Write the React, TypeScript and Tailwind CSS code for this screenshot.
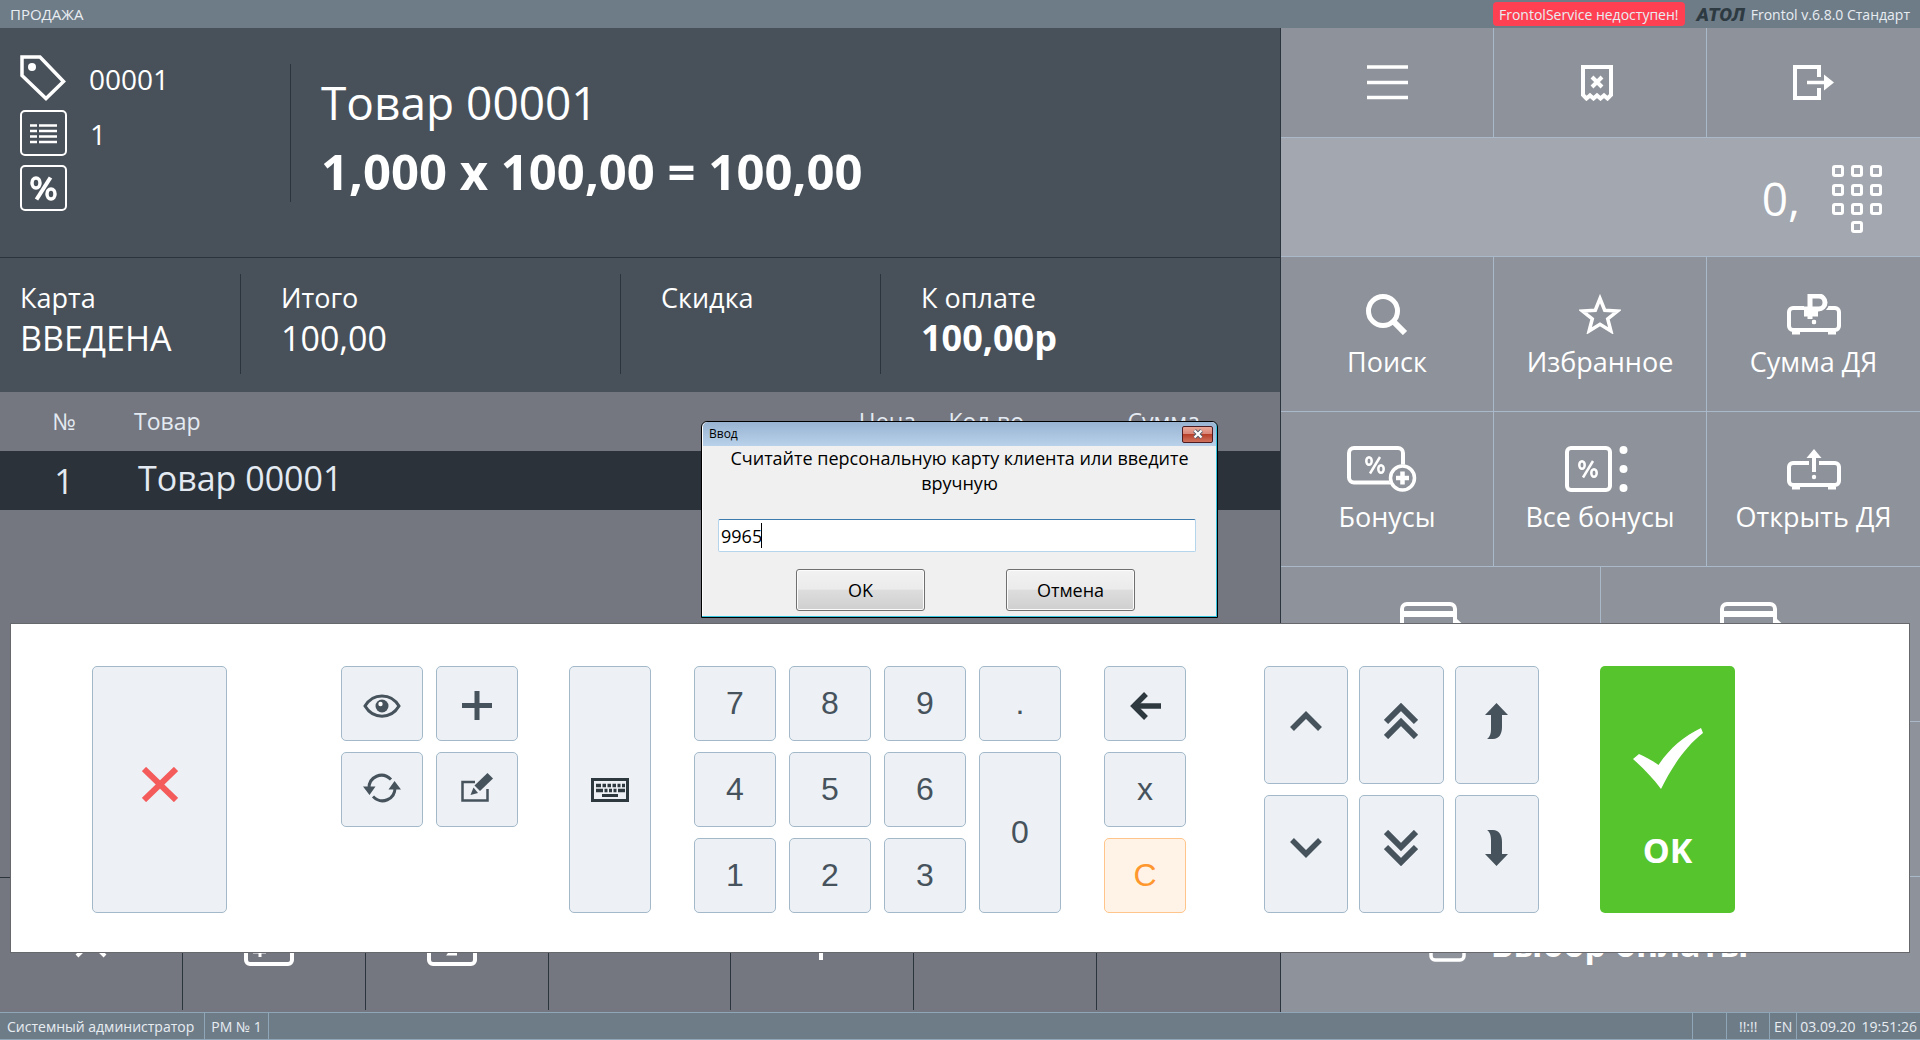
import type { ReactNode } from 'react';

const KEY = 'flex items-center justify-center rounded-[5px] border border-[#a3b9ca] bg-[#edf1f5] text-[#46525c]';

/* ---------- Icons ---------- */

function TagIcon() {
  return (
    <svg width="46" height="46" viewBox="0 0 46 46" fill="none" stroke="currentColor" strokeWidth="3.5">
      <path d="M2 2h18L43.500 26.500 26 43.500 2 20.500z" />
      <circle cx="12" cy="12" r="4" fill="currentColor" stroke="none" />
    </svg>
  );
}

function ListIcon() {
  return (
    <svg width="47" height="46" viewBox="0 0 47 46" fill="none" stroke="currentColor">
      <rect x="1" y="1" width="45" height="44" rx="4" strokeWidth="2" />
      <path d="M10 15.500h7M19 15.500h18M10 21h7M19 21h18M10 26.500h7M19 26.500h18M10 32h7M19 32h18" strokeWidth="2.500" />
    </svg>
  );
}

function PercentIcon() {
  return (
    <svg width="47" height="46" viewBox="0 0 47 46" fill="none" stroke="currentColor">
      <rect x="1" y="1" width="45" height="44" rx="4" strokeWidth="2" />
      <ellipse cx="16" cy="18" rx="4" ry="5" strokeWidth="3.500" />
      <ellipse cx="31" cy="29" rx="4" ry="5" strokeWidth="3.500" />
      <path d="M30.500 12.500l-14 22" strokeWidth="4" />
    </svg>
  );
}

function MenuIcon() {
  return (
    <svg width="41" height="35" viewBox="0 0 41 35" stroke="currentColor" strokeWidth="3.500">
      <path d="M0 2h41M0 17.500h41M0 32.500h41" />
    </svg>
  );
}

function ReceiptIcon() {
  return (
    <svg width="38" height="36" viewBox="0 0 38 36" fill="none" stroke="currentColor" strokeWidth="4">
      <path d="M5.500 33.500L2 30V2h28v28l-3.500 3.500-3.500-3-3.500 3-3.500-3-3.500 3-3.500-3z" />
      <path d="M11 12l10 10M21 12L11 22" />
    </svg>
  );
}

function ExitIcon() {
  return (
    <svg width="41" height="35" viewBox="0 0 41 35" fill="none" stroke="currentColor" strokeWidth="4">
      <path d="M26 12V2H2v31h24V23" />
      <path d="M14 17.500h18" strokeWidth="3.500" />
      <path d="M31 9.500v16l10-8z" fill="currentColor" stroke="none" />
    </svg>
  );
}

function KeypadIcon() {
  const dots = [
    [0, 0], [19, 0], [38, 0],
    [0, 19], [19, 19], [38, 19],
    [0, 38], [19, 38], [38, 38],
    [19, 56],
  ];
  return (
    <svg width="50" height="68" viewBox="0 0 50 68" fill="none" stroke="currentColor" strokeWidth="3">
      {dots.map(([x, y]) => (
        <rect key={`${x}-${y}`} x={x + 1.5} y={y + 1.5} width="9" height="9" rx="1.500" />
      ))}
    </svg>
  );
}

function SearchIcon() {
  return (
    <svg width="42" height="41" viewBox="0 0 42 41" fill="none" stroke="currentColor">
      <circle cx="17" cy="17" r="14.500" strokeWidth="5" />
      <path d="M27 27l12 12" strokeWidth="6" />
    </svg>
  );
}

function StarIcon() {
  return (
    <svg width="42" height="40" viewBox="0 0 42 40" fill="none" stroke="currentColor" strokeWidth="3.500">
      <path d="M21 4.500l4.700 11.700 12.800.8-9.800 7.800 3.200 12.200L21 30.300 10.100 37l3.200-12.200L3.500 17l12.800-.8z" />
    </svg>
  );
}

function DrawerBody() {
  return (
    <>
      <path d="M20 14H6a4 4 0 0 0-4 4v14a4 4 0 0 0 4 4h42a4 4 0 0 0 4-4V18a4 4 0 0 0-4-4H34" strokeWidth="4" />
      <path d="M5 39h8M41 39h8" strokeWidth="3" />
      <circle cx="27" cy="28" r="2.200" fill="currentColor" stroke="none" />
    </>
  );
}

function DrawerSumIcon() {
  return (
    <svg width="54" height="41" viewBox="0 0 54 41" fill="none" stroke="currentColor">
      <DrawerBody />
      <path d="M23.500 25V2h8a6.500 6.500 0 0 1 0 13H17M17 20h14" stroke="#8e929a" strokeWidth="8" />
      <path d="M23 25V2h8.500a6.500 6.500 0 0 1 0 13H17M17 20h14" strokeWidth="5" />
      <circle cx="27" cy="28" r="2.200" fill="currentColor" stroke="none" />
    </svg>
  );
}

function DrawerOpenIcon() {
  return (
    <svg width="54" height="41" viewBox="0 0 54 41" fill="none" stroke="currentColor">
      <DrawerBody />
      <path d="M18 14h4M32 14h4M27 7v16" strokeWidth="4" />
      <path d="M27 0l7.500 9h-15z" fill="currentColor" stroke="none" />
    </svg>
  );
}

function SmallPercent({ x, y }: { x: number; y: number }) {
  return (
    <g transform={`translate(${x} ${y})`} strokeWidth="2.500">
      <ellipse cx="4" cy="5" rx="2.700" ry="3.800" />
      <ellipse cx="16" cy="13" rx="2.700" ry="3.800" />
      <path d="M15 1L5 17.500" />
    </g>
  );
}

function BonusIcon() {
  return (
    <svg width="80" height="46" viewBox="0 0 80 46" fill="none" stroke="currentColor">
      <rect x="2" y="2" width="54" height="34.500" rx="5" strokeWidth="4" />
      <SmallPercent x={18} y={10} />
      <circle cx="55.500" cy="32" r="13.500" fill="#8e929a" stroke="none" />
      <circle cx="55.500" cy="32" r="12" strokeWidth="3.500" />
      <path d="M49 32h13M55.500 25.500v13" strokeWidth="4.500" />
    </svg>
  );
}

function AllBonusIcon() {
  return (
    <svg width="70" height="46" viewBox="0 0 70 46" fill="none" stroke="currentColor">
      <rect x="2" y="2" width="43" height="42" rx="4" strokeWidth="4" />
      <SmallPercent x={13} y={14} />
      <g fill="currentColor" stroke="none">
        <circle cx="58.500" cy="4" r="4" />
        <circle cx="58.500" cy="23" r="4" />
        <circle cx="58.500" cy="42" r="4" />
      </g>
    </svg>
  );
}

function CardIcon() {
  return (
    <svg width="80" height="46" viewBox="0 0 80 46" fill="none" stroke="currentColor">
      <rect x="2" y="2" width="53" height="38" rx="5" strokeWidth="4" />
      <path d="M2 12h53" strokeWidth="6" />
      <path d="M57 17l11 10H46z" fill="currentColor" stroke="none" />
    </svg>
  );
}

function SheetIcon({ children }: { children: ReactNode }) {
  return (
    <svg width="60" height="46" viewBox="0 0 60 46" fill="none" stroke="currentColor" strokeWidth="3">
      <rect x="2" y="2" width="46" height="41" rx="4" strokeWidth="4" />
      {children}
    </svg>
  );
}

function EyeIcon() {
  return (
    <svg width="38" height="24" viewBox="0 0 38 24" fill="none" stroke="currentColor" strokeWidth="3">
      <path d="M2 12C10-1.500 28-1.500 36 12 28 25.500 10 25.500 2 12z" />
      <circle cx="19" cy="12" r="6.500" fill="currentColor" stroke="none" />
      <circle cx="17.500" cy="10" r="2.200" fill="#fff" stroke="none" />
    </svg>
  );
}

function RefreshIcon() {
  return (
    <svg width="38" height="30" viewBox="0 0 38 30" fill="none" stroke="currentColor" strokeWidth="3">
      <path d="M6 15C6 4 19-2.500 28 6.500" />
      <path d="M32 15c0 11-13 17.500-22 8.500" />
      <path d="M0 13.500h12.500L6.500 22zM25.500 16.500H38L31.500 8z" fill="currentColor" stroke="none" />
    </svg>
  );
}

function EditIcon() {
  return (
    <svg width="32" height="29" viewBox="0 0 32 29" fill="none" stroke="currentColor" strokeWidth="2.500">
      <path d="M14 9H1.500v18.500h25V16" />
      <path d="M26.500 0L32 5.500 19 18l-5.500-5.500z" fill="currentColor" stroke="none" />
      <path d="M12.500 14.500L17 20l-7.500 2z" fill="currentColor" stroke="none" />
    </svg>
  );
}

function KeyboardIcon() {
  return (
    <svg width="38" height="24" viewBox="0 0 38 24" fill="none" stroke="#2e383f">
      <rect x="1.500" y="1.500" width="35" height="21" strokeWidth="3" />
      <path d="M5 7.500h5M11.500 7.500h3.500M16.500 7.500H20M21.500 7.500H25M26.500 7.500h3M31 7.500h3" strokeWidth="3.500" />
      <path d="M5 12.500h7M13.500 12.500h3M18 12.500h3M22.500 12.500h3M27 12.500h7" strokeWidth="3.500" />
      <path d="M11 17.500h16" strokeWidth="3" />
    </svg>
  );
}

function BackIcon() {
  return (
    <svg width="31" height="28" viewBox="0 0 31 28" fill="none" stroke="#2e383f" strokeWidth="5.500">
      <path d="M31 14H5" />
      <path d="M16 2L4 14l12 12" />
    </svg>
  );
}

function ChevronIcon({ down = false }: { down?: boolean }) {
  return (
    <svg width="32" height="20" viewBox="0 0 32 20" fill="none" stroke="currentColor" strokeWidth="5.500">
      <path d={down ? 'M2 2l14 14L30 2' : 'M2 18L16 4l14 14'} />
    </svg>
  );
}

function DoubleChevronIcon({ down = false }: { down?: boolean }) {
  return (
    <svg width="34" height="36" viewBox="0 0 34 36" fill="none" stroke="currentColor" strokeWidth="6">
      <path d={down ? 'M2 2l15 15L32 2M2 17l15 15 15-15' : 'M2 19L17 4l15 15M2 34l15-15 15 15'} />
    </svg>
  );
}

function TurnIcon({ down = false }: { down?: boolean }) {
  return (
    <svg width="24" height="36" viewBox="0 0 24 36" fill="currentColor">
      {down ? (
        <path d="M2 0h6c6 0 9 5 9 12v12h6L11.500 36 0 24h6V10C6 4 4 1.500 2 0z" />
      ) : (
        <path d="M2 36h6c6 0 9-5 9-12V12h6L11.500 0 0 12h6v14c0 6-2 8.500-4 10z" />
      )}
    </svg>
  );
}

/* ---------- Data ---------- */

const totals = [
  { label: 'Карта', value: 'ВВЕДЕНА', width: 'w-[241px]', bold: false },
  { label: 'Итого', value: '100,00', width: 'w-[380px]', bold: false },
  { label: 'Скидка', value: '', width: 'w-[260px]', bold: false },
  { label: 'К оплате', value: '100,00р', width: 'flex-1', bold: true },
];

const topActions = [
  { name: 'Меню', icon: <MenuIcon /> },
  { name: 'Отмена чека', icon: <ReceiptIcon /> },
  { name: 'Выход', icon: <ExitIcon /> },
];

const actions = [
  { name: 'Поиск', icon: <SearchIcon /> },
  { name: 'Избранное', icon: <StarIcon /> },
  { name: 'Сумма ДЯ', icon: <DrawerSumIcon /> },
  { name: 'Бонусы', icon: <BonusIcon /> },
  { name: 'Все бонусы', icon: <AllBonusIcon /> },
  { name: 'Открыть ДЯ', icon: <DrawerOpenIcon /> },
];

const bottomActions = [
  <svg width="50" height="46" viewBox="0 0 50 46" fill="none" stroke="currentColor" strokeWidth="4">
    <path d="M11 35L40 6M10 6l29 29" />
  </svg>,
  <SheetIcon><path d="M16 36V12h8a6 6 0 0 1 0 13H9M9 31h13" /></SheetIcon>,
  <SheetIcon><path d="M21 22a4 4 0 0 1 8 1l-7 10h8" /></SheetIcon>,
  null,
  <svg width="50" height="46" viewBox="0 0 50 46" stroke="currentColor" strokeWidth="4">
    <path d="M24 4v35M8 20h34" />
  </svg>,
  null,
  null,
];

const digits = ['7', '8', '9', '4', '5', '6', '1', '2', '3'];

/* ---------- Sections ---------- */

function TitleBar() {
  return (
    <header className="flex h-7 shrink-0 items-center justify-between bg-[#6e7c88] px-[10px] text-[14px] text-[#e8edf2]">
      <span className="text-[15px]">ПРОДАЖА</span>
      <div className="flex items-center">
        <span className="flex h-6 items-center rounded bg-[#ff4052] px-[6px]">FrontolService недоступен!</span>
        <span className="ml-3 mr-[6px] font-['Roboto',sans-serif] text-[19px] font-black italic leading-none text-[#2e3a41]">АТОЛ</span>
        <span>Frontol v.6.8.0 Стандарт</span>
      </div>
    </header>
  );
}

function PositionInfo() {
  return (
    <section className="flex h-[230px] shrink-0 border-b border-[#2b343d] bg-[#48515a] text-white">
      <div className="flex w-[291px] py-9">
        <div className="flex h-[138px] flex-1 items-center border-r border-[#2b343d] pl-5">
          <div className="grid gap-[9px] pb-1 pt-1">
            {[
              { icon: <TagIcon />, text: '00001' },
              { icon: <ListIcon />, text: '1' },
              { icon: <PercentIcon />, text: '' },
            ].map((row, i) => (
              <div key={i} className="flex items-center gap-[23px]">
                {row.icon}
                <span className="pt-[2px] text-[28px] leading-none">{row.text}</span>
              </div>
            ))}
          </div>
        </div>
      </div>
      <div className="pl-[30px] pt-10">
        <h1 className="text-[46px] leading-[69px]">Товар 00001</h1>
        <p className="text-[49px] font-bold leading-[69px]">1,000 x 100,00 = 100,00</p>
      </div>
    </section>
  );
}

function Totals() {
  return (
    <section className="flex h-[134px] shrink-0 bg-[#48515a] py-4 text-white">
      {totals.map((t, i) => (
        <div
          key={t.label}
          className={`${t.width} flex h-[100px] flex-col pt-1 ${i === 0 ? 'pl-5' : 'pl-10'} ${i < 3 ? 'border-r border-[#2b343d]' : ''}`}
        >
          <span className="text-[27px] leading-10">{t.label}</span>
          <span className={`leading-10 ${t.bold ? 'text-[36px] font-bold' : 'text-[34px]'}`}>{t.value}</span>
        </div>
      ))}
    </section>
  );
}

function Positions() {
  return (
    <div className="flex-1">
      <table className="w-full table-fixed text-left text-[#e4eaf2]">
        <colgroup>
          <col className="w-[128px]" />
          <col />
          <col className="w-[110px]" />
          <col className="w-[108px]" />
          <col className="w-[176px]" />
          <col className="w-[80px]" />
        </colgroup>
        <thead>
          <tr className="h-[59px] text-[23px]">
            <th className="text-center font-normal">№</th>
            <th className="pl-[6px] font-normal">Товар</th>
            <th className="text-right font-normal">Цена</th>
            <th className="text-right font-normal">Кол-во</th>
            <th className="text-right font-normal">Сумма</th>
            <th></th>
          </tr>
        </thead>
        <tbody>
          <tr className="h-[59px] bg-[#2b3239] text-[34px] leading-none">
            <td className="text-center">1</td>
            <td className="pb-[6px] pl-[10px]">Товар 00001</td>
            <td></td>
            <td></td>
            <td></td>
            <td></td>
          </tr>
        </tbody>
      </table>
    </div>
  );
}

function BottomActions() {
  return (
    <div className="grid h-[135px] shrink-0 grid-cols-7 border-t border-[#2b343d] pb-[2px]">
      {bottomActions.map((icon, i) => (
        <button
          key={i}
          aria-label={`Действие ${i + 1}`}
          className="flex items-center justify-center border-r border-[#2b343d] text-white last:border-r-0"
        >
          {icon}
        </button>
      ))}
    </div>
  );
}

function SidePanel() {
  const line = 'border-[#a9b9c9]';
  return (
    <aside className="flex w-1/3 shrink-0 flex-col border-l border-[#2b343d] bg-[#8e929a] text-white">
      <div className={`grid h-[110px] grid-cols-3 border-b ${line}`}>
        {topActions.map((a) => (
          <button key={a.name} aria-label={a.name} className={`flex items-center justify-center border-r ${line} last:border-r-0`}>
            {a.icon}
          </button>
        ))}
      </div>
      <div className={`flex h-[119px] items-center justify-end gap-8 border-b ${line} bg-[#a3a7af] pr-[38px]`}>
        <output className="pt-[2px] text-[46px] leading-none">0,</output>
        <button aria-label="Цифровая клавиатура" className="pt-1">
          <KeypadIcon />
        </button>
      </div>
      <div className="grid grid-cols-3">
        {actions.map((a) => (
          <button
            key={a.name}
            className={`flex h-[155px] flex-col items-center border-b border-r ${line} pt-8 nth-[3n]:border-r-0`}
          >
            <span className="flex h-[50px] items-center">{a.icon}</span>
            <span className="text-[27px] leading-[46px]">{a.name}</span>
          </button>
        ))}
      </div>
      <div className="grid grid-cols-2">
        {['Карта 1', 'Карта 2', 'Карта 3', 'Карта 4'].map((name, i) => (
          <button
            key={name}
            aria-label={name}
            className={`flex h-[155px] items-start justify-center border-b ${line} pt-[35px] odd:border-r`}
          >
            {i < 2 && <CardIcon />}
          </button>
        ))}
      </div>
      <button className="flex flex-1 items-center justify-center gap-[25px] pr-6 text-[34px] font-bold">
        <svg width="37" height="34" viewBox="0 0 37 34" fill="none" stroke="currentColor" strokeWidth="3.500">
          <rect x="2" y="2" width="33" height="30" rx="4" />
        </svg>
        Выбор оплаты
      </button>
    </aside>
  );
}

function StatusBar() {
  const cell = 'flex items-center border-[#8fa6b8]';
  return (
    <footer className="flex h-7 shrink-0 border-y border-[#8fa6b8] bg-[#6e7c88] text-[14px] text-[#e8edf2]">
      <span className={`${cell} border-r pl-[7px] pr-[10px]`}>Системный администратор</span>
      <span className={`${cell} border-r px-[6px]`}>РМ № 1</span>
      <span className="flex-1" />
      <span className={`${cell} w-[34px] border-l`} />
      <span className={`${cell} w-[43px] justify-center border-l`}>!!:!!</span>
      <span className={`${cell} w-[27px] justify-center border-l`}>EN</span>
      <span className={`${cell} gap-[6px] border-l px-[3px]`}>
        <span>03.09.20</span>
        <span>19:51:26</span>
      </span>
    </footer>
  );
}

function CardDialog() {
  const button =
    'h-[42px] w-[129px] rounded-[3px] border border-[#707070] bg-[linear-gradient(#f2f2f2_0%,#ebebeb_48%,#dddddd_50%,#cfcfcf_100%)] shadow-[inset_0_0_0_1px_#fcfcfc]';
  return (
    <div
      role="dialog"
      aria-label="Ввод"
      className="absolute left-[701px] top-[421px] z-20 flex w-[517px] flex-col rounded-t-[6px] border border-black bg-[#b9d1ea] px-px pb-px text-black shadow-[inset_-1px_-1px_0_#35c4dd,inset_1px_1px_0_#fff]"
    >
      <div className="flex h-6 items-center justify-between rounded-t-[5px] bg-[linear-gradient(#98b4d2,#b9d1ea)] pl-[6px] pr-[3px] text-[12px]">
        <span>Ввод</span>
        <button
          aria-label="Закрыть"
          className="flex h-[17px] w-[31px] items-center justify-center rounded-[2px] border border-[#4d1c22] bg-[linear-gradient(#e9a899_0%,#d98476_48%,#b8402a_50%,#d0735f_100%)]"
        >
          <svg width="12" height="10" viewBox="0 0 12 10">
            <path d="M2.500 1.500l7 7M9.500 1.500l-7 7" stroke="#56606c" strokeWidth="4" />
            <path d="M2.500 1.500l7 7M9.500 1.500l-7 7" stroke="#fff" strokeWidth="2.200" />
          </svg>
        </button>
      </div>
      <div className="bg-[#f0f0f0] px-[15px] pb-[5px]">
        <label htmlFor="card" className="block h-[73px] px-2 text-center text-[18px] leading-[25px]">
          Считайте персональную карту клиента или введите вручную
        </label>
        <div className="relative mr-[5px]">
          <input
            id="card"
            defaultValue="9965"
            className="h-[33px] w-full rounded-[2px] border border-[#b5d5ec] border-t-[#3d7bad] bg-white px-[2px] text-[18px] outline-none"
          />
          <span className="absolute left-[43px] top-1 h-[25px] w-px bg-black" />
        </div>
        <div className="mt-[17px] flex justify-center gap-[81px] pl-3 text-[18px]">
          <button className={button}>OK</button>
          <button className={button}>Отмена</button>
        </div>
      </div>
    </div>
  );
}

function TouchKeyboard() {
  const cols =
    'grid-cols-[81fr_135fr_114fr_177fr_51fr_82fr_43fr_367fr_43fr_82fr_78fr_275fr_61fr_135fr_174fr]';
  return (
    <div
      className={`absolute inset-x-[10px] bottom-[87px] z-10 grid ${cols} border border-[#66686c] bg-white pb-[39px] pt-[42px] font-['Liberation_Sans',sans-serif] text-[32px] leading-none`}
    >
      <button aria-label="Закрыть клавиатуру" className={`${KEY} col-start-2 pb-[10px]`}>
        <svg width="36" height="35" viewBox="0 0 36 35" stroke="#f45b5b" strokeWidth="6">
          <path d="M2 2l32 31M34 2L2 33" />
        </svg>
      </button>

      <div className="col-start-4 grid grid-cols-2 grid-rows-[75px_75px] gap-x-[13px] gap-y-[11px]">
        <button aria-label="Просмотр" className={`${KEY} pt-1`}><EyeIcon /></button>
        <button aria-label="Добавить" className={`${KEY} pt-1`}>
          <svg width="30" height="29" viewBox="0 0 30 29" stroke="currentColor" strokeWidth="5">
            <path d="M0 14.500h30M15 0v29" />
          </svg>
        </button>
        <button aria-label="Обновить" className={`${KEY} pb-1`}><RefreshIcon /></button>
        <button aria-label="Изменить" className={`${KEY} pb-1`}><EditIcon /></button>
      </div>

      <button aria-label="Клавиатура" className={`${KEY} col-start-6`}><KeyboardIcon /></button>

      {/* Digits fill three columns, dot and zero take the fourth */}
      <div className="col-start-8 grid grid-flow-row-dense grid-cols-4 grid-rows-[75px_75px_75px] gap-x-[13px] gap-y-[11px]">
        {digits.map((d) => (
          <button key={d} className={`${KEY} pb-[2px]`}>{d}</button>
        ))}
        <button className={`${KEY} col-start-4 row-start-1 pb-[2px]`}>.</button>
        <button className={`${KEY} col-start-4 row-span-2 row-start-2 pb-[2px]`}>0</button>
      </div>

      <div className="col-start-10 grid grid-rows-[75px_75px_75px] gap-[11px]">
        <button aria-label="Назад" className={`${KEY} pt-1`}><BackIcon /></button>
        <button className={`${KEY} pb-[2px]`}>x</button>
        <button className="flex items-center justify-center rounded-[5px] border border-[#ffc58a] bg-[#fff3e8] pb-[2px] text-[#ff972f]">C</button>
      </div>

      <div className="col-start-12 grid grid-cols-3 grid-rows-[118px_118px] gap-[11px]">
        <button aria-label="Вверх" className={`${KEY} pb-2`}><ChevronIcon /></button>
        <button aria-label="Страница вверх" className={`${KEY} pb-2`}><DoubleChevronIcon /></button>
        <button aria-label="В начало" className={`${KEY} pb-2`}><TurnIcon /></button>
        <button aria-label="Вниз" className={`${KEY} pb-3`}><ChevronIcon down /></button>
        <button aria-label="Страница вниз" className={`${KEY} pb-3`}><DoubleChevronIcon down /></button>
        <button aria-label="В конец" className={`${KEY} pb-3`}><TurnIcon down /></button>
      </div>

      <button className="col-start-14 flex flex-col items-center justify-center gap-11 rounded-[5px] bg-[#56c42d] pt-4 font-['Open_Sans',sans-serif] text-[34px] font-bold text-white">
        <svg width="70" height="61" viewBox="0 0 70 61" fill="currentColor">
          <path d="M0 31l6-5c7 3 14 7 19.500 11C36 21 51 8 68 0l2 5C52 19 39 39 28 61 20 50 10 40 0 31z" />
        </svg>
        <span>OK</span>
      </button>
    </div>
  );
}

export default function App() {
  return (
    <div className="relative flex min-h-screen flex-col overflow-hidden bg-[#747780] font-['Open_Sans','Noto_Sans',sans-serif]">
      <TitleBar />
      <div className="flex flex-1">
        <main className="flex flex-1 flex-col">
          <PositionInfo />
          <Totals />
          <Positions />
          <BottomActions />
        </main>
        <SidePanel />
      </div>
      <StatusBar />
      <CardDialog />
      <TouchKeyboard />
    </div>
  );
}
